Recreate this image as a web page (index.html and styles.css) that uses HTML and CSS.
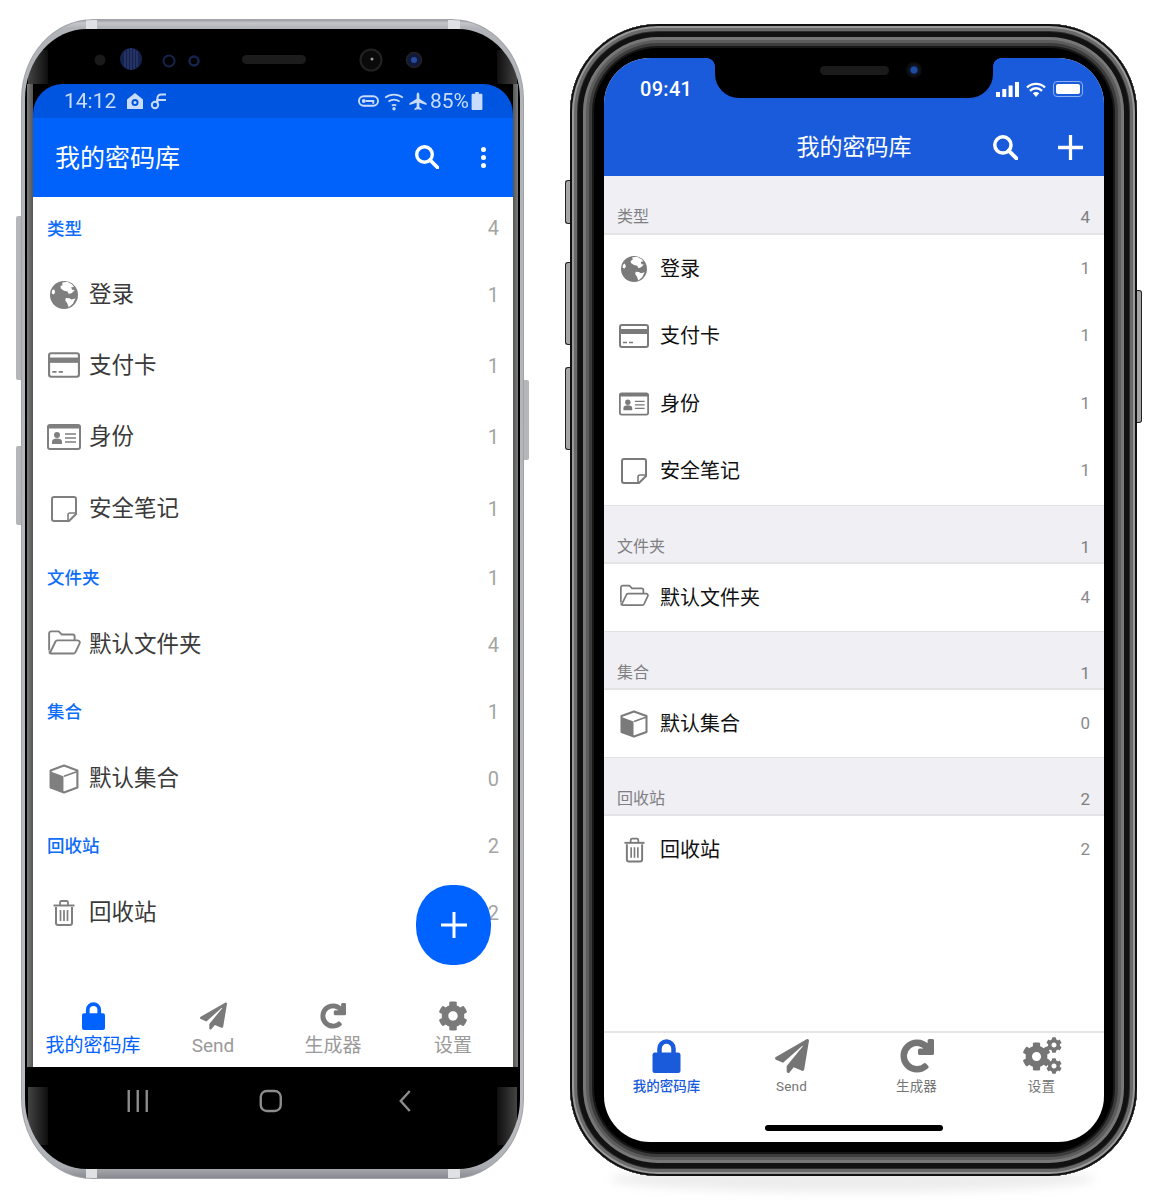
FILE: index.html
```html
<!DOCTYPE html>
<html lang="zh-CN">
<head>
<meta charset="utf-8">
<title>我的密码库</title>
<link rel="stylesheet" href="styles.css">
</head>
<body>
<svg class="sprite" aria-hidden="true">
  <symbol id="globe" viewBox="0 0 24 24">
    <circle cx="12" cy="12" r="12" fill="currentColor"/>
    <path fill="#fff" d="M10.500 1.200 15 .7l4 2.200 1.600 2.200-2.400.3.700 2.200 2.300.2-2.400 2.400-2.700 1-1.100-2.300-3-.6-2.800-1.800-.2-2.200 1.700-.6z"/>
    <path fill="#fff" d="M13.500 14.500l3 .2 2 1.200 3.300-.8-2.200 4.400-3.600 3-1.300-3.600-1.600-2z"/>
    <path fill="#fff" d="M1.800 8l1.800-1 .8 2.400-1 2.200-1.900-.8z"/>
  </symbol>
  <symbol id="card" viewBox="0 0 30 24">
    <rect x="1" y="1" width="28" height="22" rx="2" fill="none" stroke="currentColor" stroke-width="2"/>
    <rect x="1" y="5" width="28" height="5" fill="currentColor"/>
    <path d="M4 18.500h4M10 18.500h4" stroke="currentColor" stroke-width="1.600"/>
  </symbol>
  <symbol id="idcard" viewBox="0 0 34 26">
    <rect x="1" y="1" width="32" height="24" rx="2" fill="none" stroke="currentColor" stroke-width="2"/>
    <rect x="1" y="1" width="32" height="3.500" fill="currentColor"/>
    <circle cx="10" cy="11" r="3" fill="currentColor"/>
    <path d="M5 20v-2.500c0-2 2-3 5-3s5 1 5 3V20z" fill="currentColor"/>
    <path d="M18 10h11M18 14h11M18 18h11" stroke="currentColor" stroke-width="1.500"/>
  </symbol>
  <symbol id="note" viewBox="0 0 26 26">
    <path d="M3 1h20a2 2 0 0 1 2 2v15l-7 7H3a2 2 0 0 1-2-2V3a2 2 0 0 1 2-2z" fill="none" stroke="currentColor" stroke-width="2"/>
    <path d="M25 17h-6a2 2 0 0 0-2 2v6" fill="none" stroke="currentColor" stroke-width="1.600"/>
  </symbol>
  <symbol id="folder" viewBox="0 0 32 24">
    <path d="M2 20V4a2 2 0 0 1 2-2h7l3 3h10a2 2 0 0 1 2 2v3" fill="none" stroke="currentColor" stroke-width="1.800"/>
    <path d="M2.500 22.800 8 11.500a2 2 0 0 1 1.800-1H29a2 2 0 0 1 1.700 2.800l-4 8.400a2 2 0 0 1-1.800 1.100H4a2 2 0 0 1-1.500-.500z" fill="none" stroke="currentColor" stroke-width="1.800"/>
  </symbol>
  <symbol id="cube" viewBox="0 0 28 28">
    <path d="M14 1.500 26.500 6v16L14 26.500 1.500 22V6z" fill="#fff" stroke="currentColor" stroke-width="2" stroke-linejoin="round"/>
    <path d="M1.500 7 13.500 11.500V26L1.500 21.500z" fill="currentColor"/>
    <path d="M14 11.500 26.500 7" stroke="currentColor" stroke-width="1.500"/>
  </symbol>
  <symbol id="trash" viewBox="0 0 22 26">
    <path d="M3 7v16a2 2 0 0 0 2 2h12a2 2 0 0 0 2-2V7" fill="none" stroke="currentColor" stroke-width="2"/>
    <path d="M.5 5.500h21" stroke="currentColor" stroke-width="2"/>
    <path d="M7 5V2.500A1.500 1.500 0 0 1 8.500 1h5A1.500 1.500 0 0 1 15 2.500V5" fill="none" stroke="currentColor" stroke-width="1.800"/>
    <path d="M7.500 10v11M11 10v11M14.500 10v11" stroke="currentColor" stroke-width="1.700"/>
  </symbol>
  <symbol id="lock" viewBox="0 0 28 34">
    <path d="M7 16V9.500a7 7 0 0 1 14 0V16" fill="none" stroke="currentColor" stroke-width="4.500"/>
    <rect x="0" y="13.500" width="28" height="20.500" rx="2.500" fill="currentColor"/>
  </symbol>
  <symbol id="plane" viewBox="0 0 512 512">
    <path fill="currentColor" d="M476 3.200 12.500 270.600c-18.100 10.400-15.800 35.600 2.200 43.200L121 358.400l287.300-253.200c5.500-4.900 13.300 2.600 8.600 8.300L176 407v80.500c0 23.600 28.500 32.900 42.500 15.800L282 426l124.600 52.200c14.200 6 30.400-2.900 33-18.200l72-432C515 7.800 493.300-6.800 476 3.200z"/>
  </symbol>
  <symbol id="redo" viewBox="-16 -16 544 544">
    <path fill="currentColor" stroke="currentColor" stroke-width="32" d="M500.330 0h-47.410a12 12 0 0 0-12 12.570l4 82.760A247.420 247.420 0 0 0 256 8C119.340 8 7.900 119.530 8 256.190 8.100 393.070 119.100 504 256 504a247.100 247.100 0 0 0 166.180-63.910 12 12 0 0 0 .48-17.430l-34-34a12 12 0 0 0-16.380-.55A176 176 0 1 1 402.100 157.800l-101.530-4.870a12 12 0 0 0-12.570 12v47.410a12 12 0 0 0 12 12h200.330a12 12 0 0 0 12-12V12a12 12 0 0 0-12-12z"/>
  </symbol>
  <symbol id="cog" viewBox="0 0 512 512">
    <path fill="currentColor" d="M487.400 315.700l-42.600-24.600c4.300-23.200 4.300-47 0-70.200l42.600-24.600c4.900-2.800 7.100-8.600 5.500-14-11.100-35.600-30-67.800-54.700-94.600-3.800-4.100-10-5.100-14.800-2.300L380.800 110c-17.900-15.400-38.500-27.300-60.800-35.100V25.800c0-5.600-3.900-10.500-9.400-11.700-36.700-8.200-74.300-7.800-109.200 0-5.500 1.200-9.400 6.100-9.400 11.700V75c-22.200 7.900-42.800 19.800-60.800 35.100L88.700 85.500c-4.900-2.800-11-1.900-14.800 2.300-24.700 26.700-43.600 58.900-54.700 94.600-1.700 5.400.6 11.200 5.500 14L67.300 221c-4.300 23.200-4.300 47 0 70.200l-42.600 24.600c-4.900 2.800-7.100 8.600-5.500 14 11.100 35.600 30 67.800 54.700 94.600 3.800 4.100 10 5.100 14.800 2.300l42.600-24.600c17.900 15.400 38.500 27.300 60.800 35.100v49.200c0 5.600 3.900 10.500 9.400 11.700 36.700 8.200 74.300 7.800 109.200 0 5.500-1.200 9.400-6.100 9.400-11.700v-49.200c22.200-7.900 42.800-19.800 60.800-35.100l42.600 24.600c4.900 2.800 11 1.900 14.800-2.300 24.700-26.700 43.600-58.900 54.700-94.600 1.500-5.500-.7-11.300-5.600-14.100zM256 336c-44.100 0-80-35.900-80-80s35.900-80 80-80 80 35.900 80 80-35.900 80-80 80z"/>
  </symbol>
  <symbol id="cogs" viewBox="0 0 40 38">
    <use href="#cog" x="0" y="5" width="29" height="29"/>
    <use href="#cog" x="24" y="0" width="16" height="16"/>
    <use href="#cog" x="24" y="21" width="16" height="16"/>
  </symbol>
  <symbol id="search" viewBox="0 0 24 24">
    <circle cx="9.500" cy="9.500" r="7.800" fill="none" stroke="currentColor" stroke-width="3.400"/>
    <path d="M15 15l7.500 7.500" stroke="currentColor" stroke-width="3.800" stroke-linecap="round"/>
  </symbol>
</svg>

<main class="stage">

  <section class="android">
    <span class="a-btn a-btn--bixby"></span>
    <span class="a-btn a-btn--vol"></span>
    <span class="a-btn a-btn--power"></span>
    <div class="a-inner">
      <div class="a-bezel">
        <svg class="a-sensors" viewBox="0 0 480 54">
          <circle cx="67" cy="30" r="5.500" fill="#1a1a1a"/>
          <circle cx="98" cy="29" r="11" fill="#16224e"/>
          <path d="M92 21v16M95 19v20M98 18v22M101 19v20M104 21v16" stroke="#33447a" stroke-width="1"/>
          <circle cx="136" cy="31" r="5.500" fill="#000" stroke="#16244e" stroke-width="2"/>
          <circle cx="161" cy="31" r="4.500" fill="#000" stroke="#16244e" stroke-width="2.500"/>
          <rect x="209" y="25" width="64" height="9" rx="4.500" fill="#1c1c1c"/>
          <circle cx="338" cy="30" r="10.500" fill="#0a0a0a" stroke="#222" stroke-width="2"/>
          <circle cx="339" cy="29" r="1.500" fill="#999"/>
          <circle cx="381" cy="30" r="7.500" fill="#10193c" stroke="#222" stroke-width="1.500"/>
          <circle cx="381" cy="30" r="3" fill="#274a9c"/>
        </svg>
      </div>
      <div class="a-screen">
        <div class="a-status">
          <span class="a-time">14:12</span>
          <svg class="a-sico" viewBox="0 0 18 18"><path d="M9 1 17 7.500V17H1V7.500z" fill="currentColor"/><circle cx="9" cy="10.500" r="3.500" fill="#0055e0"/><circle cx="9" cy="10.500" r="1.500" fill="currentColor"/></svg>
          <svg class="a-sico a-sico--link" viewBox="0 0 18 18"><circle cx="5" cy="13" r="3.200" fill="none" stroke="currentColor" stroke-width="2"/><path d="M7.500 10.500V6a3.500 3.500 0 0 1 3.500-3.500h5M6 8h10" fill="none" stroke="currentColor" stroke-width="2"/></svg>
          <span class="a-status-fill"></span>
          <svg class="a-sico a-sico--key" viewBox="0 0 22 14"><rect x="1" y="2" width="20" height="10" rx="5" fill="none" stroke="currentColor" stroke-width="2"/><circle cx="6" cy="7" r="2" fill="currentColor"/><path d="M8 7h8v3" fill="none" stroke="currentColor" stroke-width="2"/></svg>
          <svg class="a-sico a-sico--wifi" viewBox="0 0 18 18"><path d="M1 6a13 13 0 0 1 16 0M4 9.500a9 9 0 0 1 10 0M7 13a4 4 0 0 1 4 0" fill="none" stroke="currentColor" stroke-width="1.500"/><circle cx="9" cy="16" r="1.500" fill="currentColor"/></svg>
          <svg class="a-sico a-sico--air" viewBox="0 0 20 20"><path d="M10 0c1 0 1.500 1.500 1.500 3v4l8 5v2l-8-2.500V16l2.500 2v1.500L10 18.500l-4 1V18l2.500-2v-4.500L.5 14v-2l8-5V3c0-1.500.5-3 1.500-3z" fill="currentColor"/></svg>
          <span class="a-pct">85%</span>
          <svg class="a-sico a-sico--bat" viewBox="0 0 12 20"><path d="M4 0h4v2h3a1 1 0 0 1 1 1v16a1 1 0 0 1-1 1H1a1 1 0 0 1-1-1V3a1 1 0 0 1 1-1h3z" fill="currentColor"/></svg>
        </div>
        <header class="a-app">
          <h1 class="a-title">我的密码库</h1>
          <svg class="a-search"><use href="#search"/></svg>
          <span class="a-more"><i></i><i></i><i></i></span>
        </header>
        <div class="a-list">
          <div class="a-head a-head--first"><span>类型</span><b>4</b></div>
          <div class="a-row a-row--tall"><svg class="a-ico a-ico--globe"><use href="#globe"/></svg><span>登录</span><b>1</b></div>
          <div class="a-row a-row--tall"><svg class="a-ico a-ico--card"><use href="#card"/></svg><span>支付卡</span><b>1</b></div>
          <div class="a-row a-row--tall"><svg class="a-ico a-ico--id"><use href="#idcard"/></svg><span>身份</span><b>1</b></div>
          <div class="a-row a-row--tall"><svg class="a-ico a-ico--note"><use href="#note"/></svg><span>安全笔记</span><b>1</b></div>
          <div class="a-head"><span>文件夹</span><b>1</b></div>
          <div class="a-row"><svg class="a-ico a-ico--folder"><use href="#folder"/></svg><span>默认文件夹</span><b>4</b></div>
          <div class="a-head"><span>集合</span><b>1</b></div>
          <div class="a-row"><svg class="a-ico a-ico--cube"><use href="#cube"/></svg><span>默认集合</span><b>0</b></div>
          <div class="a-head"><span>回收站</span><b>2</b></div>
          <div class="a-row"><svg class="a-ico a-ico--trash"><use href="#trash"/></svg><span>回收站</span><b>2</b></div>
          <button class="a-fab" type="button" aria-label="添加"><svg viewBox="0 0 26 26"><path d="M13 0v26M0 13h26" stroke="#fff" stroke-width="3"/></svg></button>
        </div>
        <nav class="a-tabs">
          <div class="a-tab a-tab--on"><svg class="a-tab-ico a-tab-ico--lock"><use href="#lock"/></svg><span>我的密码库</span></div>
          <div class="a-tab"><svg class="a-tab-ico a-tab-ico--plane"><use href="#plane"/></svg><span>Send</span></div>
          <div class="a-tab"><svg class="a-tab-ico a-tab-ico--redo"><use href="#redo"/></svg><span>生成器</span></div>
          <div class="a-tab"><svg class="a-tab-ico"><use href="#cog"/></svg><span>设置</span></div>
        </nav>
      </div>
      <div class="a-nav">
        <svg viewBox="0 0 22 24" class="a-nav-ico"><path d="M2 1v22M11 1v22M20 1v22" stroke="#8c8c8c" stroke-width="2.400"/></svg>
        <svg viewBox="0 0 24 24" class="a-nav-ico"><rect x="2" y="2" width="20" height="20" rx="6" fill="none" stroke="#8c8c8c" stroke-width="2.400"/></svg>
        <svg viewBox="0 0 14 24" class="a-nav-ico"><path d="M12 2 3 12l9 10" fill="none" stroke="#8c8c8c" stroke-width="2.400"/></svg>
      </div>
    </div>
  </section>

  <section class="iphone">
    <span class="i-floor"></span>
    <span class="i-btn i-btn--mute"></span>
    <span class="i-btn i-btn--up"></span>
    <span class="i-btn i-btn--down"></span>
    <span class="i-btn i-btn--side"></span>
    <div class="i-screen">
      <div class="i-notch">
        <span class="i-speaker"></span>
        <span class="i-camera"></span>
      </div>
      <header class="i-top">
        <div class="i-status">
          <span class="i-time">09:41</span>
          <span class="i-status-fill"></span>
          <svg class="i-signal" viewBox="0 0 23 15"><path d="M0 10h4v5H0zM6.300 7h4v8h-4zM12.600 3.500h4V15h-4zM19 0h4v15h-4z" fill="#fff"/></svg>
          <svg class="i-wifi" viewBox="0 0 20 15"><path d="M1 5.500a13 13 0 0 1 18 0M4 8.800a8.500 8.500 0 0 1 12 0" fill="none" stroke="#fff" stroke-width="2.400"/><path d="M6.800 11.300a4.500 4.500 0 0 1 6.400 0L10 15z" fill="#fff"/></svg>
          <span class="i-bat"><i></i></span>
        </div>
        <div class="i-bar">
          <span></span>
          <h1 class="i-title">我的密码库</h1>
          <span class="i-actions">
            <svg class="i-search"><use href="#search"/></svg>
            <svg class="i-plus" viewBox="0 0 26 26"><path d="M13 0v26M0 13h26" stroke="#fff" stroke-width="3.400"/></svg>
          </span>
        </div>
      </header>
      <div class="i-list">
        <div class="i-head"><span>类型</span><b>4</b></div>
        <div class="i-row i-row--tall"><svg class="i-ico i-ico--globe"><use href="#globe"/></svg><span>登录</span><b>1</b></div>
        <div class="i-row i-row--tall"><svg class="i-ico i-ico--card"><use href="#card"/></svg><span>支付卡</span><b>1</b></div>
        <div class="i-row i-row--tall"><svg class="i-ico i-ico--id"><use href="#idcard"/></svg><span>身份</span><b>1</b></div>
        <div class="i-row i-row--tall"><svg class="i-ico i-ico--note"><use href="#note"/></svg><span>安全笔记</span><b>1</b></div>
        <div class="i-head"><span>文件夹</span><b>1</b></div>
        <div class="i-row"><svg class="i-ico i-ico--folder"><use href="#folder"/></svg><span>默认文件夹</span><b>4</b></div>
        <div class="i-head"><span>集合</span><b>1</b></div>
        <div class="i-row"><svg class="i-ico i-ico--cube"><use href="#cube"/></svg><span>默认集合</span><b>0</b></div>
        <div class="i-head"><span>回收站</span><b>2</b></div>
        <div class="i-row"><svg class="i-ico i-ico--trash"><use href="#trash"/></svg><span>回收站</span><b>2</b></div>
      </div>
      <nav class="i-tabbar">
        <div class="i-tabs">
          <div class="i-tab i-tab--on"><svg class="i-tab-ico i-tab-ico--lock"><use href="#lock"/></svg><span>我的密码库</span></div>
          <div class="i-tab"><svg class="i-tab-ico"><use href="#plane"/></svg><span>Send</span></div>
          <div class="i-tab"><svg class="i-tab-ico"><use href="#redo"/></svg><span>生成器</span></div>
          <div class="i-tab"><svg class="i-tab-ico i-tab-ico--cogs"><use href="#cogs"/></svg><span>设置</span></div>
        </div>
        <span class="i-home"></span>
      </nav>
    </div>
  </section>

</main>
</body>
</html>
```
FILE: styles.css
```css
* { box-sizing: border-box; }
html { background: #fff; }
html, body { margin: 0; padding: 0; }
body { width: 1162px; height: 1200px; overflow: hidden; font-family: Roboto, "Noto Sans CJK SC", sans-serif; }
.sprite { position: absolute; width: 0; height: 0; overflow: hidden; }
svg { display: block; }
h1 { margin: 0; font-weight: 400; }
b { font-weight: 400; }

.stage { display: flex; align-items: flex-start; padding: 19px 0 0 21px; }

/* Android phone */
.android {
  position: relative; width: 503px; height: 1160px; flex: none;
  padding: 10px 4px; border-radius: 72px / 80px;
  background:
    linear-gradient(90deg, transparent 65px, #dfe1e4 65px, #dfe1e4 76px, transparent 76px, transparent 427px, #dfe1e4 427px, #dfe1e4 439px, transparent 439px),
    linear-gradient(180deg, #8f9297 0, #c4c6ca 4px, #b0b3b7 9px, #b9bbbf 96%, #a9adb2 99%, #84878c 100%);
  box-shadow: inset 0 0 0 1px #a0a3a8;
}
.a-btn { position: absolute; width: 5px; background: #b4b6b9; border-radius: 2px 0 0 2px; }
.a-btn--bixby { left: -5px; top: 197px; height: 164px; }
.a-btn--vol { left: -5px; top: 427px; height: 79px; }
.a-btn--power { right: -5px; top: 361px; height: 80px; border-radius: 0 2px 2px 0; }
.a-inner {
  height: 100%; padding: 1px 7px 0 8px;
  background:
    linear-gradient(90deg, #444, #0e0e0e) 3px 21px / 20px 34px no-repeat,
    linear-gradient(270deg, #444, #0e0e0e) right 3px top 21px / 20px 34px no-repeat,
    linear-gradient(90deg, #444, #0e0e0e) 3px 1058px / 20px 58px no-repeat,
    linear-gradient(270deg, #444, #0e0e0e) right 3px top 1058px / 20px 58px no-repeat,
    linear-gradient(90deg, #000 0 2px, #7c7c7c 2px, #555 8px, #000 8px, #000 calc(100% - 7px), #555 calc(100% - 7px), #7c7c7c calc(100% - 2px), #000 calc(100% - 2px)) 0 55px / 100% 983px no-repeat,
    #000;
  border-radius: 62px / 70px; overflow: hidden; display: flex; flex-direction: column;
}
.a-bezel { height: 54px; flex: none; }
.a-sensors { width: 480px; height: 54px; }
.a-screen { display: flex; flex-direction: column; height: 983px; flex: none; filter: blur(.5px); }
.a-status {
  display: flex; align-items: center; height: 34px; flex: none;
  padding: 0 30px 0 31px; background: #0055e0; color: #c9dcff; border-radius: 30px 30px 0 0;
}
.a-time { font-size: 21px; margin-right: 10px; }
.a-sico { width: 18px; height: 18px; margin-right: 6px; }
.a-sico--link { margin-right: 0; }
.a-status-fill { flex: 1; }
.a-sico--key { width: 21px; height: 14px; margin-right: 5px; }
.a-sico--wifi { width: 20px; height: 20px; margin-right: 5px; }
.a-sico--air { width: 18px; height: 19px; margin-right: 3px; }
.a-pct { font-size: 21px; margin-right: 2px; }
.a-sico--bat { width: 12px; height: 18px; margin-right: 0; }
.a-app {
  display: flex; align-items: center; height: 79px; flex: none;
  padding: 0 27px 0 22px; background: #0062fb; color: #fff;
}
.a-title { flex: 1; font-size: 25px; line-height: 79px; margin-top: 2px; }
.a-search { width: 24px; height: 24px; color: #fff; margin-right: 42px; margin-top: -1px; }
.a-more { display: flex; flex-direction: column; gap: 3px; }
.a-more i { display: block; width: 5px; height: 5px; border-radius: 50%; background: #fff; }
.a-list { position: relative; flex: 1; background: #fff; }
.a-head, .a-row { display: flex; align-items: center; justify-content: space-between; padding: 0 14px; height: 67px; }
.a-head--first { height: 62px; }
.a-head span { font-size: 17.500px; font-weight: 500; color: #0d6dfa; margin-top: -2px; }
.a-head b, .a-row b { font-size: 20px; color: #a4a4a4; }
.a-row { justify-content: flex-start; color: #3a3a3a; }
.a-row--tall { height: 71.330px; }
.a-row span { flex: 1; font-size: 22.500px; margin: -6px 0 0 8px; }
.a-ico { width: 34px; height: 26px; color: #7f7f7f; padding: 0; }
.a-ico--globe { width: 28px; height: 28px; margin: 0 3px; }
.a-ico--card { width: 32px; height: 28px; margin: -2px 1px 0; }
.a-ico--note { width: 26px; height: 28px; margin: 0 4px; }
.a-ico--folder { margin-top: -6px; }
.a-ico--cube { width: 30px; height: 32px; margin: 0 2px; }
.a-ico--trash { width: 22px; height: 28px; margin: 0 6px; }
.a-fab {
  position: absolute; left: 383px; top: 688px; width: 75px; height: 80px; padding: 0; border: 0;
  border-radius: 46% / 48%; background: #0062ff;
  display: flex; align-items: center; justify-content: center;
}
.a-fab svg { width: 26px; height: 26px; }
.a-tabs { display: grid; grid-template-columns: repeat(4, 120px); height: 97px; flex: none; padding-top: 31px; background: #fff; }
.a-tab { display: flex; flex-direction: column; align-items: center; color: #7a7a7a; }
.a-tab span { font-size: 19px; line-height: 24px; margin-top: 3px; color: #9a9a9a; white-space: nowrap; }
.a-tab--on, .a-tab--on span { color: #0062ff; }
.a-tab-ico { width: 30px; height: 30px; }
.a-tab-ico--lock { width: 23px; }
.a-tab-ico--plane { width: 27px; }
.a-tab-ico--redo { width: 26px; }
.a-nav { flex: 1; display: flex; justify-content: center; align-items: center; padding: 0 4px 34px 0; }
.a-nav-ico { width: 133.500px; height: 24px; }

/* iPhone */
.iphone {
  position: relative; width: 567px; height: 1152px; flex: none; margin: 5px 0 0 46px;
  padding: 34px 33px 34px 34px; border-radius: 88px; background: #000;
  box-shadow: inset 0 0 0 2px #111, inset 0 0 0 4px #9a9a9a, inset 0 0 0 7px #6a6a6a,
    inset 0 0 0 8px #2c2c2c, inset 0 0 0 13px #111, inset 0 0 0 16px #777,
    inset 0 0 0 19px #5c5c5c, inset 0 0 0 22px #3c3c3c, inset 0 0 0 24px #161616;
}
.i-floor {
  position: absolute; left: 40px; right: 42px; bottom: -16px; height: 26px; z-index: -1;
  border-radius: 50%; background: #ededed; filter: blur(5px);
}
.i-btn { position: absolute; width: 5px; background: #a6a6a6; border: 1.500px solid #222; border-right: 0; }
.i-btn--mute { left: -5px; top: 156px; height: 44px; border-radius: 3px 0 0 3px; }
.i-btn--up { left: -5px; top: 238px; height: 83px; border-radius: 3px 0 0 3px; }
.i-btn--down { left: -5px; top: 343px; height: 83px; border-radius: 3px 0 0 3px; }
.i-btn--side { right: -5px; top: 266px; height: 133px; border: 1.500px solid #222; border-left: 0; border-radius: 0 3px 3px 0; }
.i-screen {
  position: relative; height: 100%; display: flex; flex-direction: column; background: #fff;
  border-radius: 46px; overflow: hidden;
}
.i-notch {
  position: absolute; left: 111px; top: 0; width: 278px; height: 40px; background: #000;
  border-radius: 0 0 24px 24px;
}
.i-notch::before, .i-notch::after {
  content: ""; position: absolute; top: 0; width: 8px; height: 8px;
}
.i-notch::before { left: -8px; background: radial-gradient(circle at 0 100%, transparent 7.500px, #000 8px); }
.i-notch::after { right: -8px; background: radial-gradient(circle at 100% 100%, transparent 7.500px, #000 8px); }
.i-speaker { position: absolute; left: 105px; top: 8px; width: 69px; height: 9px; border-radius: 5px; background: #1b1b1b; }
.i-camera { position: absolute; left: 191px; top: 4px; width: 16px; height: 16px; border-radius: 50%; background: radial-gradient(circle, #1d4da0 0 3px, #0f1730 4px, #0b0b0b 7px); }
.i-top { height: 118px; flex: none; background: #1a5bdb; color: #fff; }
.i-status { display: flex; align-items: center; height: 60px; padding: 0 21px 0 36px; }
.i-time { font-size: 20px; font-weight: 500; margin-top: 2px; letter-spacing: .3px; }
.i-status-fill { flex: 1; }
.i-signal { width: 23px; height: 15px; margin: 2px 7px 0 0; }
.i-wifi { width: 20px; height: 15px; margin: 2px 7px 0 0; }
.i-bat { display: block; width: 30px; height: 16px; margin-top: 2px; padding: 2px; border: 1px solid #8db2f2; border-radius: 4px; }
.i-bat i { display: block; height: 100%; border-radius: 2px; background: #fff; }
.i-bar { display: grid; grid-template-columns: 1fr auto 1fr; align-items: center; height: 56px; padding: 0 21px; }
.i-title { font-size: 23px; line-height: 56px; margin-top: 2px; }
.i-actions { display: flex; align-items: center; justify-content: flex-end; gap: 40px; }
.i-search { width: 25px; height: 25px; color: #fff; }
.i-plus { width: 25px; height: 25px; }
.i-list { flex: 1; background: #fff; }
.i-head, .i-row { display: flex; align-items: center; justify-content: space-between; padding: 0 14px 0 15px; }
.i-head {
  height: 59px; background: #efeff4; border-top: 1px solid #e2e2e6; border-bottom: 2px solid #e4e4e6;
  padding: 25px 14px 0 13px; color: #7f7f82;
}
.i-list > .i-head:first-child { border-top: 0; }
.i-head span { font-size: 16px; line-height: 20px; }
.i-head b { font-size: 17px; line-height: 20px; }
.i-row { height: 67px; justify-content: flex-start; color: #111; }
.i-row--tall { height: 67.500px; }
.i-row span { flex: 1; font-size: 20px; margin: -3px 0 0 11px; }
.i-row b { font-size: 17px; color: #8a8a8e; margin-top: -2px; }
.i-ico { width: 30px; height: 24px; color: #7a7a7a; }
.i-ico--globe { width: 26px; height: 26px; margin: 0 2px; }
.i-ico--note { width: 26px; height: 26px; margin: 0 2px; }
.i-ico--folder { margin-top: -5px; }
.i-ico--cube { width: 28px; height: 28px; margin: 0 1px; }
.i-ico--trash { width: 21px; height: 26px; margin: 0 4.500px; }
.i-tabbar { height: 111px; flex: none; display: flex; flex-direction: column; align-items: center; border-top: 2px solid #e6e6e6; }
.i-tabs { display: grid; grid-template-columns: repeat(4, 125px); width: 100%; padding-top: 6px; }
.i-tab { display: flex; flex-direction: column; align-items: center; color: #757575; }
.i-tab span { font-size: 13.500px; line-height: 18px; margin-top: 4px; white-space: nowrap; letter-spacing: .2px; }
.i-tab--on { color: #1a5bdb; }
.i-tab--on span { font-weight: 500; letter-spacing: 0; }
.i-tab-ico { width: 34px; height: 34px; }
.i-tab-ico--lock { width: 29px; }
.i-tab-ico--cogs { width: 40px; height: 38px; margin: -2px 0 -2px; }
.i-home { width: 178px; height: 6px; margin-top: 30px; border-radius: 3px; background: #000; }
```
